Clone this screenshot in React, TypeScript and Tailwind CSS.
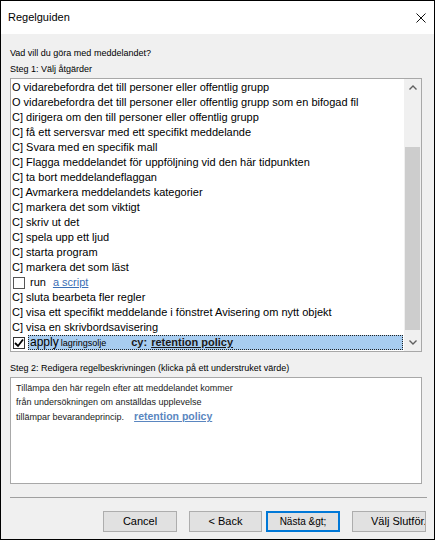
import React from 'react';

const rows = [
  "O vidarebefordra det till personer eller offentlig grupp",
  "O vidarebefordra det till personer eller offentlig grupp som en bifogad fil",
  "C] dirigera om den till personer eller offentlig grupp",
  "C] få ett serversvar med ett specifikt meddelande",
  "C] Svara med en specifik mall",
  "C] Flagga meddelandet för uppföljning vid den här tidpunkten",
  "C] ta bort meddelandeflaggan",
  "C] Avmarkera meddelandets kategorier",
  "C] markera det som viktigt",
  "C] skriv ut det",
  "C] spela upp ett ljud",
  "C] starta program",
  "C] markera det som läst",
  "run",
  "C] sluta bearbeta fler regler",
  "C] visa ett specifikt meddelande i fönstret Avisering om nytt objekt",
  "C] visa en skrivbordsavisering",
  "apply",
];

function Chevron({ up }: { up?: boolean }) {
  return (
    <svg width="8" height="5" viewBox="0 0 8 5" className={up ? "" : "rotate-180"}>
      <path d="M0.5 4.5 L4 1 L7.5 4.5" fill="none" stroke="#606060" strokeWidth="1.4" />
    </svg>
  );
}

function ListRow({ text }: { text: string }) {
  if (text === "run") {
    return (
      <div className="h-[15px] flex items-center">
        <div className="ml-[2px] w-[12px] h-[12px] border border-[#555] bg-white" />
        <span className="ml-[5px]">run</span>
        <span className="ml-[7px] text-[#3b6fb6] underline">a script</span>
      </div>
    );
  }
  if (text === "apply") {
    return (
      <div className="h-[15px] flex items-center">
        <div className="ml-[2px] w-[12px] h-[12px] border border-[#333] bg-white flex items-center justify-center">
          <svg width="10" height="10" viewBox="0 0 10 10">
            <path d="M1 5 L4 8 L9 1.5" fill="none" stroke="#000" strokeWidth="1.8" />
          </svg>
        </div>
        <div className="ml-[3px] mr-[1px] flex-1 h-[15px] bg-[#a8cdf0] border border-dotted border-[#222] flex items-baseline leading-[13px]">
          <span className="text-[12px] ml-[1px]">apply</span>
          <span className="text-[9px] ml-[2px]">lagringsolje</span>
          <span className="ml-[25px] font-bold text-[#1a1a1a]">cy:</span>
          <span className="ml-[4px] font-bold underline text-[#1a1a1a]">retention policy</span>
        </div>
      </div>
    );
  }
  return (
    <div className="h-[15px] flex items-center pl-[1px] whitespace-nowrap">{text}</div>
  );
}

export default function App() {
  return (
    <div className="w-[435px] h-[540px] border border-black bg-[#f0f0f0] flex flex-col text-black font-['Liberation_Sans',Arial,sans-serif] overflow-hidden">
      <div className="h-[33px] bg-white flex items-center justify-between pl-[7px] pr-[8px]">
        <span className="text-[11px]">Regelguiden</span>
        <svg width="10" height="10" viewBox="0 0 10 10">
          <path d="M0.5 0.5 L9.5 9.5 M9.5 0.5 L0.5 9.5" stroke="#111" strokeWidth="1" />
        </svg>
      </div>

      <div className="flex flex-col px-[9px]">
        <div className="mt-[13px] text-[9px] leading-[12px]">Vad vill du göra med meddelandet?</div>
        <div className="mt-[4px] text-[9px] leading-[12px]">Steg 1: Välj åtgärder</div>

        <div className="mt-[3px] w-[412px] h-[274px] border border-[#a8a8a8] bg-white flex">
          <div className="flex-1 pt-[1px] text-[11px] overflow-hidden">
            {rows.map((r, i) => (
              <ListRow key={i} text={r} />
            ))}
          </div>
          <div className="w-[17px] flex flex-col bg-[#f0f0f0]">
            <div className="h-[17px] flex items-center justify-center">
              <Chevron up />
            </div>
            <div className="flex-1">
              <div className="mt-[51px] mx-[1px] h-[183px] bg-[#cdcdcd]" />
            </div>
            <div className="h-[17px] flex items-center justify-center">
              <Chevron />
            </div>
          </div>
        </div>

        <div className="mt-[10px] text-[9px] leading-[12px]">
          Steg 2: Redigera regelbeskrivningen (klicka på ett understruket värde)
        </div>
        <div className="mt-[3px] w-[412px] h-[107px] border border-[#a8a8a8] bg-white pt-[3px] pl-[5px] text-[9px] leading-[14px] text-[#1a1a1a]">
          <div>Tillämpa den här regeln efter att meddelandet kommer</div>
          <div>från undersökningen om anställdas upplevelse</div>
          <div className="flex items-baseline">
            <span>tillämpar bevarandeprincip.</span>
            <span className="ml-[10px] text-[10.5px] font-bold text-[#5a86c0] underline">retention policy</span>
          </div>
        </div>

        <div className="mt-[13px] w-[417px] h-px bg-[#a0a0a0]" />

        <div className="mt-[13px] flex justify-end pr-[-1px] mr-[-1px] text-[11px]">
          <div className="w-[74px] h-[21px] bg-[#e1e1e1] border border-[#adadad] flex items-center justify-center">
            Cancel
          </div>
          <div className="ml-[12px] w-[73px] h-[21px] bg-[#e1e1e1] border border-[#adadad] flex items-center justify-center">
            &lt; Back
          </div>
          <div className="ml-[4px] w-[74px] h-[21px] bg-[#e1e1e1] border-2 border-[#0078d7] flex items-center justify-center text-[10px]">
            Nästa &amp;gt;
          </div>
          <div className="ml-[12px] w-[74px] h-[21px] bg-[#e1e1e1] border border-[#adadad] flex items-center pl-[18px] whitespace-nowrap overflow-hidden">
            Välj Slutför.
          </div>
        </div>
      </div>
    </div>
  );
}
